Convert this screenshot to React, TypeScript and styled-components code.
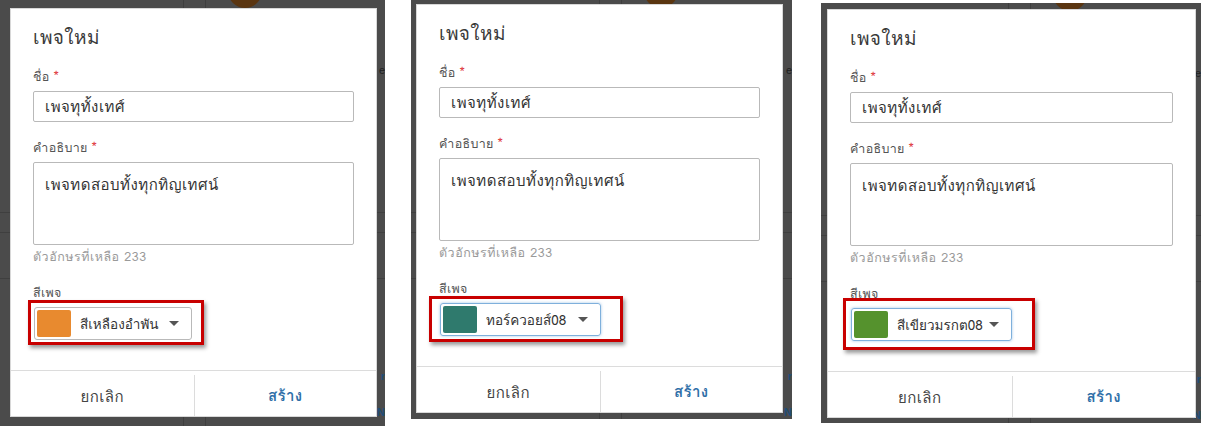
import * as React from "react";
import styled, {createGlobalStyle} from "styled-components";

const GlobalStyle = createGlobalStyle`
  html, body {
    margin: 0;
    padding: 0;
    background: #ffffff;
  }
  body {
    font-family: Loma, Tahoma, "Noto Sans Thai", "Noto Sans", "DejaVu Sans", sans-serif;
    color: #333333;
  }
`;

type ShotProps = { $gap: number; $top: number; $w: number; $h: number; $padTop: number; $padLeft: number };
type Mark = { t: number; r: number; b: number; l: number };

const Strip = styled.div`
  display: flex;
  align-items: flex-start;
  width: 1222px;
  height: 440px;
  overflow: hidden;
`;

const Shot = styled.div<ShotProps>`
  position: relative;
  flex: none;
  margin-left: ${({$gap}) => $gap}px;
  margin-top: ${({$top}) => $top}px;
  width: ${({$w}) => $w}px;
  height: ${({$h}) => $h}px;
  padding: ${({$padTop, $padLeft}) => `${$padTop}px 0 0 ${$padLeft}px`};
  box-sizing: border-box;
  background: #4b4b4b;
  overflow: hidden;
`;

/* bits of the page behind the overlay */
const GhostLine = styled.div<{ $x: number }>`
  position: absolute;
  top: 0;
  bottom: 0;
  left: ${({$x}) => $x}px;
  width: 1px;
  background: #3e3e3e;
`;

const GhostRule = styled.div<{ $y: number }>`
  position: absolute;
  left: 0;
  right: 0;
  top: ${({$y}) => $y}px;
  height: 1px;
  background: #3f3f3f;
`;

const GhostAvatar = styled.div<{ $x: number }>`
  position: absolute;
  top: -26px;
  left: ${({$x}) => $x}px;
  width: 34px;
  height: 34px;
  border-radius: 50%;
  background: #5a3510;
`;

const GhostChar = styled.span<{ $y: number; $blue?: boolean }>`
  position: absolute;
  right: 0;
  top: ${({$y}) => $y}px;
  font-family: "Liberation Sans", Arial, sans-serif;
  font-size: 11px;
  line-height: 12px;
  font-weight: ${({$blue}) => $blue ? 700 : 400};
  color: ${({$blue}) => $blue ? "#1f4e79" : "#1e1e1e"};
`;

const Dialog = styled.div<{ $w: number }>`
  position: relative;
  width: ${({$w}) => $w}px;
  height: 409px;
  box-sizing: border-box;
  background: #ffffff;
  border: 1px solid #d8d8d8;
  display: flex;
  flex-direction: column;
`;

const Body = styled.div`
  flex: 1;
  padding: 17px 22px 0 22px;
  display: flex;
  flex-direction: column;
`;

const Title = styled.h2`
  margin: 0 0 20px;
  font-size: 19px;
  font-weight: 400;
  line-height: 22px;
  letter-spacing: 0.4px;
  color: #3a3a3a;
`;

const Label = styled.div`
  font-size: 12.5px;
  line-height: 16px;
  letter-spacing: 0.3px;
  color: #555555;
  margin-bottom: 6px;
`;

const Star = styled.span`
  color: #e0393e;
  font-size: 14px;
  margin-left: 4px;
`;

const Field = styled.div<{ $tall?: boolean }>`
  height: ${({$tall}) => $tall ? 83 : 31}px;
  box-sizing: border-box;
  border: 1px solid #b9b9b9;
  border-radius: 2px;
  padding: ${({$tall}) => $tall ? "10px 11px" : "0 11px"};
  display: flex;
  align-items: ${({$tall}) => $tall ? "flex-start" : "center"};
  font-size: 15px;
  letter-spacing: 0.5px;
  color: #333333;
  margin-bottom: ${({$tall}) => $tall ? 4 : 17}px;
`;

const Counter = styled.div`
  font-size: 12.5px;
  line-height: 16px;
  letter-spacing: 0.5px;
  color: #9a9a9a;
  margin-bottom: 20px;
`;

const SelectWrap = styled.div`
  position: relative;
  align-self: flex-start;
  margin-left: 1px;
`;

const Select = styled.div<{ $focused: boolean; $w: number }>`
  width: ${({$w}) => $w}px;
  height: 33px;
  box-sizing: border-box;
  padding: 2px;
  border: 1px solid ${({$focused}) => $focused ? "#7fb0dc" : "#b9b9b9"};
  border-radius: 3px;
  box-shadow: ${({$focused}) => $focused ? "0 0 3px rgba(102, 160, 214, 0.6)" : "none"};
  display: flex;
  align-items: center;
  font-size: 13.5px;
  color: #333333;
`;

const Swatch = styled.span<{ $color: string }>`
  flex: none;
  width: 34px;
  height: 100%;
  margin-right: 9px;
  border-radius: 2px;
  background: ${({$color}) => $color};
`;

const SelectText = styled.span`
  flex: none;
  white-space: nowrap;
`;

const Caret = styled.span`
  flex: none;
  width: 0;
  height: 0;
  margin-left: auto;
  margin-right: 10px;
  border-left: 5px solid transparent;
  border-right: 5px solid transparent;
  border-top: 5px solid #555555;
`;

const Highlight = styled.div<{ $m: Mark }>`
  position: absolute;
  top: ${({$m}) => -$m.t}px;
  right: ${({$m}) => -$m.r}px;
  bottom: ${({$m}) => -$m.b}px;
  left: ${({$m}) => -$m.l}px;
  border: 3px solid #c80000;
  box-shadow: 2px 3px 4px rgba(0, 0, 0, 0.4);
  pointer-events: none;
`;

const Footer = styled.div`
  height: 45px;
  border-top: 1px solid #dcdcdc;
  display: grid;
  grid-template-columns: 1fr 1fr;
`;

const FooterButton = styled.button<{ $primary?: boolean }>`
  border: 0;
  border-left: ${({$primary}) => $primary ? "1px solid #dcdcdc" : "0"};
  margin-top: ${({$primary}) => $primary ? 4 : 0}px;
  background: transparent;
  font-family: inherit;
  font-size: 15px;
  letter-spacing: 0.4px;
  font-weight: ${({$primary}) => $primary ? 700 : 400};
  color: ${({$primary}) => $primary ? "#2f6fa8" : "#444444"};
  padding: ${({$primary}) => $primary ? "2px 0 2px" : "6px 0 0"};
`;

type ShotData = ShotProps & { dw: number; sw: number; swatch: string; colorName: string; focused: boolean; mark: Mark };

const shots: ShotData[] = [
    {$gap: 0, $top: 0, $w: 385, $h: 426, $padTop: 8, $padLeft: 10, dw: 367, sw: 158, swatch: "#e88a2f", colorName: "สีเหลืองอำพัน", focused: false, mark: {t: 7, r: 12, b: 5, l: 6}},
    {$gap: 26, $top: 0, $w: 381, $h: 419, $padTop: 4, $padLeft: 5, dw: 367, sw: 161, swatch: "#2f7a6d", colorName: "ทอร์ควอยส์08", focused: true, mark: {t: 7, r: 22, b: 6, l: 11}},
    {$gap: 29, $top: 3, $w: 380, $h: 420, $padTop: 6, $padLeft: 6, dw: 369, sw: 161, swatch: "#55922d", colorName: "สีเขียวมรกต08", focused: true, mark: {t: 10, r: 23, b: 9, l: 8}},
];

const NewPageDialog = ({shot}: { shot: ShotData }) => (
    <Dialog $w={shot.dw}>
        <Body>
            <Title>เพจใหม่</Title>
            <Label>ชื่อ<Star>*</Star></Label>
            <Field>เพจทุทั้งเทศ์</Field>
            <Label>คำอธิบาย<Star>*</Star></Label>
            <Field $tall>เพจทดสอบทั้งทุกทิญเทศน์</Field>
            <Counter>ตัวอักษรที่เหลือ 233</Counter>
            <Label>สีเพจ</Label>
            <SelectWrap>
                <Select $focused={shot.focused} $w={shot.sw}>
                    <Swatch $color={shot.swatch}/>
                    <SelectText>{shot.colorName}</SelectText>
                    <Caret/>
                </Select>
                <Highlight $m={shot.mark}/>
            </SelectWrap>
        </Body>
        <Footer>
            <FooterButton>ยกเลิก</FooterButton>
            <FooterButton $primary>สร้าง</FooterButton>
        </Footer>
    </Dialog>
);

export default function App() {
    return (
        <>
            <GlobalStyle/>
            <Strip>
                {shots.map((shot, index) => (
                    <Shot key={index} {...shot}>
                        <GhostLine $x={183 - shot.$padLeft + 10}/>
                        <GhostLine $x={205 - shot.$padLeft + 10}/>
                        <GhostAvatar $x={228 - shot.$padLeft + 10}/>
                        <GhostRule $y={212}/>
                        <GhostRule $y={232}/>
                        <GhostRule $y={278}/>
                        <GhostChar $y={64}>e</GhostChar>
                        <GhostChar $y={370} $blue>r</GhostChar>
                        <GhostChar $y={406} $blue>N</GhostChar>
                        <NewPageDialog shot={shot}/>
                    </Shot>
                ))}
            </Strip>
        </>
    );
}
